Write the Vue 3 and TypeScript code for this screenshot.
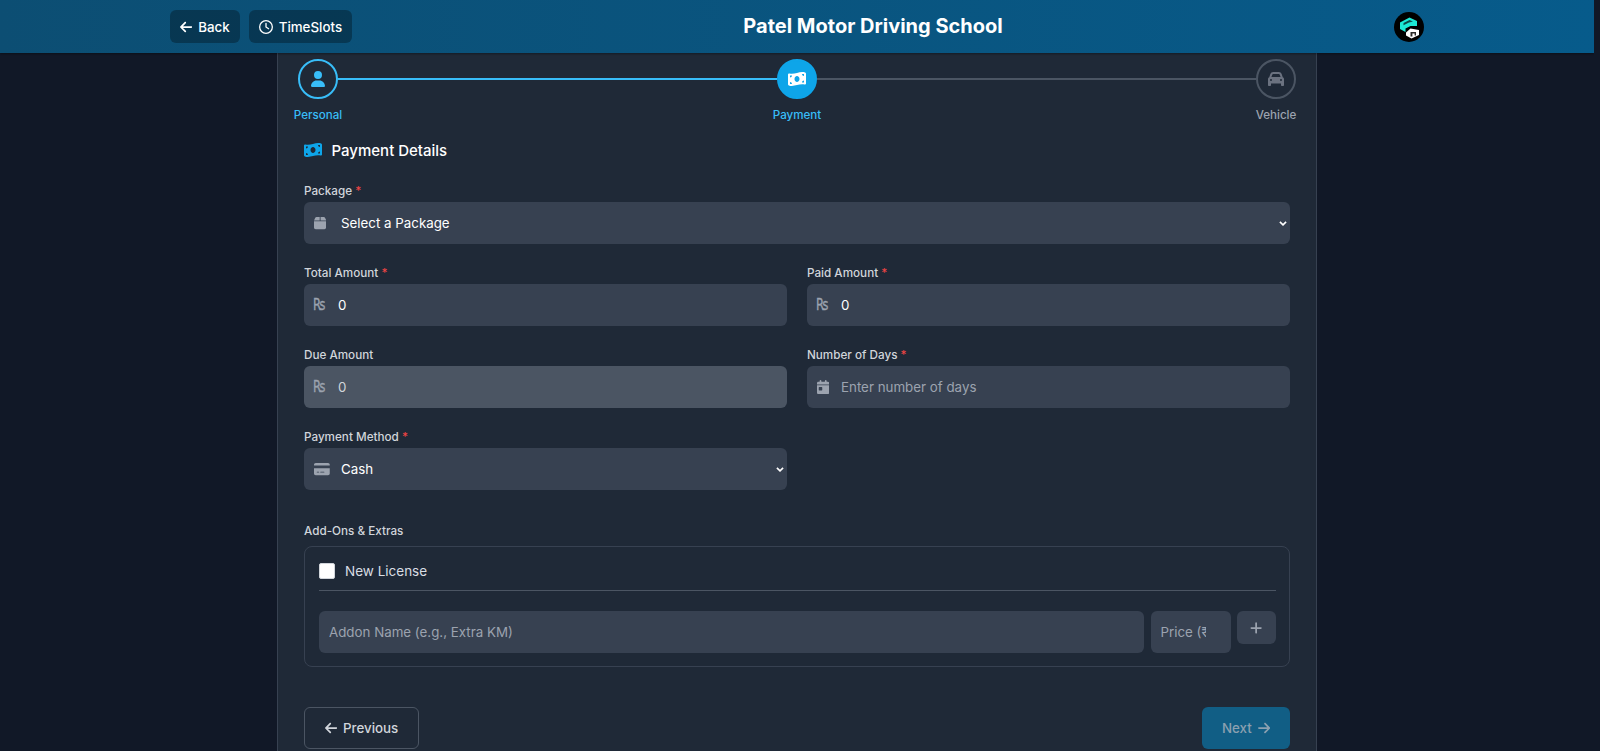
<script setup lang="ts">
import { ref } from 'vue'

const pkg = ref('')
const method = ref('Cash')

const arrowLeft = 'M9.4 233.4c-12.5 12.5-12.5 32.8 0 45.3l160 160c12.5 12.5 32.8 12.5 45.3 0s12.5-32.8 0-45.3L109.3 288 416 288c17.7 0 32-14.3 32-32s-14.3-32-32-32l-306.7 0L214.6 118.6c12.5-12.5 12.5-32.8 0-45.3s-32.8-12.5-45.3 0l-160 160z'
const arrowRight = 'M438.6 278.6c12.5-12.5 12.5-32.8 0-45.3l-160-160c-12.5-12.5-32.8-12.5-45.3 0s-12.5 32.8 0 45.3L338.8 224 32 224c-17.7 0-32 14.3-32 32s14.3 32 32 32l306.7 0L233.4 393.4c-12.5 12.5-12.5 32.8 0 45.3s32.8 12.5 45.3 0l160-160z'
const clock = 'M464 256A208 208 0 1 1 48 256a208 208 0 1 1 416 0zM0 256a256 256 0 1 0 512 0A256 256 0 1 0 0 256zM232 120V256c0 8 4 15.5 10.7 20l96 64c11 7.4 25.9 4.4 33.3-6.7s4.4-25.9-6.7-33.3L280 243.2V120c0-13.3-10.7-24-24-24s-24 10.7-24 24z'
const user = 'M224 256A128 128 0 1 0 224 0a128 128 0 1 0 0 256zm-45.7 48C79.8 304 0 383.8 0 482.3C0 498.7 13.3 512 29.7 512H418.3c16.4 0 29.7-13.3 29.7-29.7C448 383.8 368.2 304 269.7 304H178.3z'
const money = 'M0 112.5V422.3c0 18 10.1 35 27 41.3c87 32.5 174 10.3 261-11.9c79.8-20.3 159.6-40.7 239.3-18.9c23 6.3 48.7-9.5 48.7-33.4V89.7c0-18-10.1-35-27-41.3C462 15.9 375 38.1 288 60.3C208.2 80.6 128.4 100.9 48.7 79.1C25.6 72.8 0 88.6 0 112.5zM288 352c-44.2 0-80-43-80-96s35.8-96 80-96s80 43 80 96s-35.8 96-80 96zM64 352c35.3 0 64 28.7 64 64H64V352zm64-208c0 35.3-28.7 64-64 64V144h64zM512 304v64H448c0-35.3 28.7-64 64-64zM448 96h64v64c-35.3 0-64-28.7-64-64z'
const car = 'M135.2 117.4L109.1 192H402.9l-26.1-74.6C372.3 104.6 360.2 96 346.6 96H165.4c-13.6 0-25.7 8.6-30.2 21.4zM39.6 196.8L74.8 96.3C88.3 57.8 124.6 32 165.4 32H346.6c40.8 0 77.1 25.8 90.6 64.3l35.2 100.5c23.2 9.6 39.6 32.5 39.6 59.2V400v48c0 17.7-14.3 32-32 32H448c-17.7 0-32-14.3-32-32V400H96v48c0 17.7-14.3 32-32 32H32c-17.7 0-32-14.3-32-32V400 256c0-26.7 16.4-49.6 39.6-59.2zM128 288a32 32 0 1 0 -64 0 32 32 0 1 0 64 0zm288 32a32 32 0 1 0 0-64 32 32 0 1 0 0 64z'
const box = 'M50.7 58.5L0 160H208V32H93.7C75.5 32 58.9 42.3 50.7 58.5zM240 160H448L397.3 58.5C389.1 42.3 372.5 32 354.3 32H240V160zm208 32H0V416c0 35.3 28.7 64 64 64H384c35.3 0 64-28.7 64-64V192z'
const calendar = 'M128 0c17.7 0 32 14.3 32 32V64H288V32c0-17.7 14.3-32 32-32s32 14.3 32 32V64h48c26.5 0 48 21.5 48 48v48H0V112C0 85.5 21.5 64 48 64H96V32c0-17.7 14.3-32 32-32zM0 192H448V464c0 26.5-21.5 48-48 48H48c-26.5 0-48-21.5-48-48V192zm80 64c-8.8 0-16 7.2-16 16v96c0 8.8 7.2 16 16 16h96c8.8 0 16-7.2 16-16V272c0-8.8-7.2-16-16-16H80z'
const card = 'M64 32C28.7 32 0 60.7 0 96v32H576V96c0-35.3-28.7-64-64-64H64zM576 224H0V416c0 35.3 28.7 64 64 64H512c35.3 0 64-28.7 64-64V224zM112 352h64c8.8 0 16 7.2 16 16s-7.2 16-16 16H112c-8.8 0-16-7.2-16-16s7.2-16 16-16zm112 16c0-8.8 7.2-16 16-16H368c8.8 0 16 7.2 16 16s-7.2 16-16 16H240c-8.8 0-16-7.2-16-16z'
const plus = 'M256 80c0-17.7-14.3-32-32-32s-32 14.3-32 32V224H48c-17.7 0-32 14.3-32 32s14.3 32 32 32H192V432c0 17.7 14.3 32 32 32s32-14.3 32-32V288H400c17.7 0 32-14.3 32-32s-14.3-32-32-32H256V80z'
</script>

<template>
  <div class="page">
    <header class="topbar">
      <div class="top-left">
        <button class="top-btn" type="button">
          <svg class="ic-arrow" viewBox="0 0 448 512"><path :d="arrowLeft" /></svg>
          Back
        </button>
        <button class="top-btn" type="button">
          <svg class="ic-clock" viewBox="0 0 512 512"><path :d="clock" /></svg>
          TimeSlots
        </button>
      </div>
      <h1 class="school">Patel Motor Driving School</h1>
      <svg class="logo" viewBox="0 0 30 30">
        <circle cx="15" cy="15" r="15" fill="#000" />
        <path d="M6 10.5 L15.5 5.5 L23 9 L23 14 L16.5 14 L11.5 16.5 L11.5 20 L6 17 Z" fill="#1ce9d5" />
        <path d="M9.5 11 L15.5 8 L19 9.6 L15 10.4 L9.5 13.2 Z" fill="#0b4a4a" />
        <path d="M12 20.5 L16.5 16.5 L25 18 L25 23 L17.5 26.5 L12 23.5 Z" fill="#fff" />
        <path d="M16.5 20 H22 V23.5 H20.6 V21.5 H18.4 V24.6 H16.5 Z" fill="#2a2a2a" />
      </svg>
    </header>

    <main class="panel">
      <div class="stepper">
        <div class="step done">
          <div class="circle">
            <svg class="ic-user" viewBox="0 0 448 512"><path :d="user" /></svg>
          </div>
          <span class="step-label">Personal</span>
        </div>
        <div class="line on"></div>
        <div class="step current">
          <div class="circle">
            <svg class="ic-money" viewBox="0 0 576 512"><path :d="money" /></svg>
          </div>
          <span class="step-label">Payment</span>
        </div>
        <div class="line"></div>
        <div class="step todo">
          <div class="circle">
            <svg class="ic-user ic-car" viewBox="0 0 512 512"><path :d="car" /></svg>
          </div>
          <span class="step-label">Vehicle</span>
        </div>
      </div>

      <form class="form" @submit.prevent>
        <h2 class="section-title">
          <svg class="ic-money title-ic" viewBox="0 0 576 512"><path :d="money" /></svg>
          Payment Details
        </h2>

        <div class="field pkg">
          <label class="lbl">Package <span class="req">*</span></label>
          <div class="ctl">
            <svg class="ctl-ic ic-box" viewBox="0 0 448 512"><path :d="box" /></svg>
            <select v-model="pkg" class="inp sel">
              <option value="">Select a Package</option>
            </select>
            <svg class="chev" viewBox="0 0 8 5"><path d="M.9.9 4 3.9 7.1.9" /></svg>
          </div>
        </div>

        <div class="grid">
          <div class="field">
            <label class="lbl">Total Amount <span class="req">*</span></label>
            <div class="ctl">
              <span class="ctl-ic rs">₨</span>
              <input class="inp" type="text" value="0" />
            </div>
          </div>
          <div class="field">
            <label class="lbl">Paid Amount <span class="req">*</span></label>
            <div class="ctl">
              <span class="ctl-ic rs">₨</span>
              <input class="inp" type="text" value="0" />
            </div>
          </div>
          <div class="field">
            <label class="lbl">Due Amount</label>
            <div class="ctl">
              <span class="ctl-ic rs">₨</span>
              <input class="inp ro" type="text" value="0" readonly />
            </div>
          </div>
          <div class="field">
            <label class="lbl">Number of Days <span class="req">*</span></label>
            <div class="ctl">
              <svg class="ctl-ic ic-box" viewBox="0 0 448 512"><path :d="calendar" /></svg>
              <input class="inp" type="text" placeholder="Enter number of days" />
            </div>
          </div>
          <div class="field">
            <label class="lbl">Payment Method <span class="req">*</span></label>
            <div class="ctl">
              <svg class="ctl-ic ic-card" viewBox="0 0 576 512"><path :d="card" /></svg>
              <select v-model="method" class="inp sel">
                <option>Cash</option>
              </select>
              <svg class="chev" viewBox="0 0 8 5"><path d="M.9.9 4 3.9 7.1.9" /></svg>
            </div>
          </div>
        </div>

        <div class="addons">
          <label class="lbl">Add-Ons &amp; Extras</label>
          <div class="addon-box">
            <label class="check-row">
              <input class="check" type="checkbox" />
              <span>New License</span>
            </label>
            <div class="addon-row">
              <input class="inp plain name" type="text" placeholder="Addon Name (e.g., Extra KM)" />
              <input class="inp plain price" type="number" placeholder="Price (₹)" />
              <button class="add" type="button">
                <svg class="ic-arrow" viewBox="0 0 448 512"><path :d="plus" /></svg>
              </button>
            </div>
          </div>
        </div>

        <div class="nav">
          <button class="prev" type="button">
            <svg class="ic-arrow" viewBox="0 0 448 512"><path :d="arrowLeft" /></svg>
            Previous
          </button>
          <button class="next" type="button">
            Next
            <svg class="ic-arrow" viewBox="0 0 448 512"><path :d="arrowRight" /></svg>
          </button>
        </div>
      </form>
    </main>
  </div>
</template>

<style>
html, body { margin: 0; background: #111827; overflow: hidden; }
</style>

<style scoped>
* { box-sizing: border-box; }
.page {
  width: 1594px;
  height: 751px;
  overflow: hidden;
  background: #111827;
  font-family: Inter, "Liberation Sans", sans-serif;
  color: #fff;
}
svg { fill: currentColor; display: block; flex: none; }
.ic-arrow { width: 12.25px; height: 14px; }
.ic-clock { width: 14px; height: 14px; }
.ic-user { width: 14px; height: 16px; }
.ic-car { width: 16px; }
.ic-money { width: 18px; height: 16px; }
.ic-box { width: 12.25px; height: 14px; }
.ic-card { width: 15.75px; height: 14px; }

.topbar {
  position: relative;
  z-index: 1;
  height: 53px;
  padding: 0 170px;
  display: flex;
  justify-content: space-between;
  align-items: center;
  background: linear-gradient(90deg, #0c4e73, #075b8b);
  box-shadow: 0 1px 2px rgba(0, 0, 0, .35);
}
.top-left { display: flex; gap: 9px; }
.top-btn {
  height: 33px;
  padding: 0 10px;
  display: flex;
  align-items: center;
  gap: 6px;
  border: 0;
  border-radius: 6px;
  background: rgba(0, 0, 0, .3);
  color: #fff;
  font: 500 13.33px Inter, sans-serif;
}
.school {
  margin: 0;
  font-size: 20px;
  line-height: 33px;
  font-weight: 700;
}
.logo { width: 30px; height: 30px; }

.panel {
  width: 1040px;
  height: 698px;
  margin: 0 auto;
  background: #1f2937;
  border-left: 1px solid #374151;
  border-right: 1px solid #374151;
  padding: 6px 26px 0;
}
.stepper {
  display: flex;
  align-items: flex-start;
  margin: 0 -10px;
}
.step {
  width: 48px;
  display: flex;
  flex-direction: column;
  align-items: center;
  flex: none;
}
.circle {
  width: 40px;
  height: 40px;
  border-radius: 50%;
  border: 2px solid #4b5563;
  display: flex;
  align-items: center;
  justify-content: center;
  color: #6b7280;
}
.done .circle { border-color: #38bdf8; color: #38bdf8; }
.current .circle { border-color: #0ea5e9; background: #0ea5e9; color: #fff; }
.step-label {
  margin-top: 6.5px;
  font-size: 11.6px;
  line-height: 18px;
  font-weight: 500;
  color: #9ca3af;
  white-space: nowrap;
}
.done .step-label, .current .step-label { color: #38bdf8; }
.line {
  flex: 1;
  height: 2px;
  margin: 19px -4px 0;
  background: #4b5563;
}
.line.on { background: #38bdf8; }

.section-title {
  margin: 14.5px 0 0;
  display: flex;
  align-items: center;
  gap: 9.5px;
  height: 24px;
  font-size: 15px;
  font-weight: 500;
  color: #fff;
}
.title-ic { color: #0ea5e9; }
.pkg { margin-top: 21px; }
.field { display: flex; flex-direction: column; }
.lbl {
  display: block;
  font-size: 11.7px;
  line-height: 16px;
  font-weight: 500;
  color: #d1d5db;
  margin-bottom: 3px;
}
.req { color: #ef4444; }
.ctl { position: relative; }
.ctl-ic {
  position: absolute;
  left: 10px;
  top: 14px;
  color: #9ca3af;
  pointer-events: none;
}
.rs {
  top: 10px;
  left: 9px;
  font: 400 16px/22px "DejaVu Sans", sans-serif;
  -webkit-text-stroke: .35px #9ca3af;
  transform: scaleX(.72);
  transform-origin: left center;
}
.chev {
  position: absolute;
  right: 3px;
  top: 19px;
  width: 8px;
  height: 5px;
  fill: none;
  stroke: #fff;
  stroke-width: 1.6;
  pointer-events: none;
}
.inp {
  display: block;
  width: 100%;
  height: 42px;
  padding: 0 12px 0 34px;
  border: 0;
  border-radius: 6px;
  background: #374151;
  color: #fff;
  font: 400 13.33px Inter, sans-serif;
  outline: none;
}
.inp::placeholder { color: #9ca3af; }
.sel { padding-left: 37px; appearance: none; }
.ro { background: #4b5563; color: #d1d5db; }
.plain { padding-left: 10px; padding-right: 10px; }
.grid {
  display: grid;
  grid-template-columns: 1fr 1fr;
  column-gap: 20px;
  row-gap: 20.8px;
  margin-top: 21px;
}
.addons { margin-top: 33.5px; }
.addons .lbl { margin-bottom: 7px; }
.addon-box {
  height: 121px;
  padding: 14px 13px 14px 14px;
  border: 1px solid #374151;
  border-radius: 8px;
}
.check-row {
  display: flex;
  align-items: center;
  gap: 10px;
  height: 30px;
  padding: 2px 0 12px;
  border-bottom: 1px solid #4b5563;
  font-size: 13.5px;
  color: #d9dde3;
}
.check {
  appearance: none;
  width: 16px;
  height: 16px;
  margin: 0;
  background: #fff;
  border: 1px solid #d1d5db;
  border-radius: 2px;
}
.addon-row { display: flex; gap: 6.5px; align-items: flex-start; margin-top: 20px; }
.name { flex: 1; width: auto; min-width: 0; }
.price { width: 80px; flex: none; }
.add {
  width: 39px;
  height: 33px;
  display: flex;
  align-items: center;
  justify-content: center;
  border: 0;
  border-radius: 6px;
  background: #374151;
  color: #9ca3af;
  padding: 0;
}
.nav { display: flex; justify-content: space-between; margin-top: 40px; }
.prev, .next {
  height: 42px;
  display: flex;
  align-items: center;
  justify-content: center;
  gap: 6px;
  border-radius: 6px;
  font: 500 13.33px Inter, sans-serif;
}
.prev {
  width: 115px;
  background: transparent;
  border: 1px solid #4b5563;
  color: #d1d5db;
}
.next {
  width: 88px;
  border: 0;
  background: #115e85;
  color: #8ba0b0;
}
</style>
